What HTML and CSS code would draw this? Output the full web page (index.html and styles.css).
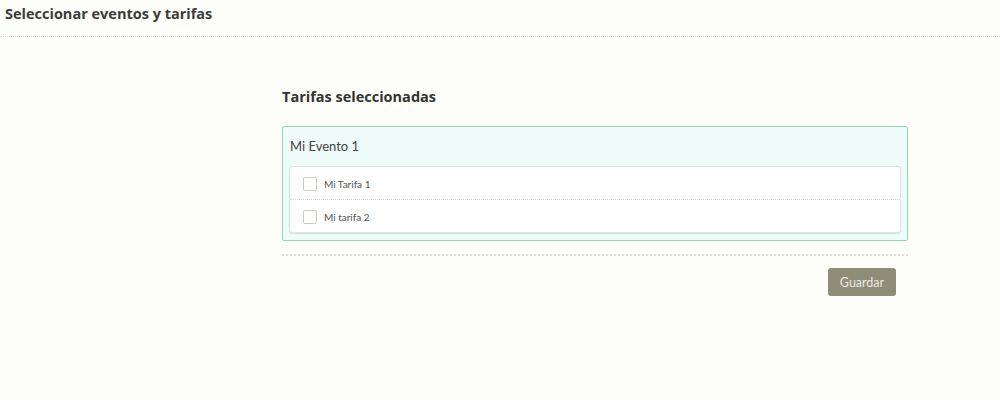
FILE: index.html
```html
<!DOCTYPE html>
<html lang="es">
<head>
<meta charset="utf-8">
<title>Seleccionar eventos y tarifas</title>
<link rel="stylesheet" href="styles.css">
</head>
<body>
<header class="topbar">
  <h1 class="page-title">Seleccionar eventos y tarifas</h1>
</header>
<main class="content">
  <section class="panel">
    <h2 class="panel-title">Tarifas seleccionadas</h2>
    <div class="event-box">
      <div class="event-name">Mi Evento 1</div>
      <ul class="rate-list">
        <li class="rate-row"><span class="check"></span><span class="rate-label">Mi Tarifa 1</span></li>
        <li class="rate-row"><span class="check"></span><span class="rate-label">Mi tarifa 2</span></li>
      </ul>
    </div>
    <hr class="divider">
    <div class="actions">
      <button class="btn-save" type="button">Guardar</button>
    </div>
  </section>
</main>
</body>
</html>
```

FILE: styles.css
```css
html, body {
  margin: 0;
  padding: 0;
  background: #fdfdf9;
  font-family: Lato, "Open Sans", sans-serif;
  color: #333;
}

.topbar {
  height: 37px;
  border-bottom: 1px dotted #d6d6dc;
  box-sizing: border-box;
  padding: 4px 0 0 5px;
}

.page-title {
  margin: 0;
  font-family: "Open Sans", sans-serif;
  font-weight: 700;
  font-size: 14.5px;
  line-height: 20px;
  color: #3c3c3c;
}

.content {
  display: flex;
  justify-content: flex-start;
  padding-left: 282px;
}

.panel {
  width: 626px;
  padding-top: 48px;
}

.panel-title {
  margin: 0 0 17px 0;
  font-family: "Open Sans", sans-serif;
  font-weight: 700;
  font-size: 14.5px;
  line-height: 24px;
  color: #333;
}

.event-box {
  border: 1px solid #93d4bf;
  background: #effbf9;
  border-radius: 2px;
  padding: 0 6px 7px 6px;
}

.event-name {
  font-size: 13px;
  line-height: 18px;
  padding: 10px 1px 11px 1px;
  color: #444;
}

.rate-list {
  list-style: none;
  margin: 0;
  padding: 0;
  background: #fefefe;
  border: 1px solid #d9e6e0;
  border-radius: 3px;
  box-shadow: 0 1px 1px rgba(150, 200, 180, 0.4);
}

.rate-row {
  display: flex;
  align-items: center;
  height: 32px;
  padding-left: 13px;
  padding-top: 1px;
  box-sizing: border-box;
}

.rate-row + .rate-row {
  height: 33px;
  border-top: 1px dotted #d8d8dc;
}

.check {
  width: 12px;
  height: 12px;
  border: 1px solid #c9c9c0;
  border-radius: 2px;
  background: #fff;
  margin-right: 7px;
}

.rate-label {
  font-size: 10px;
  color: #555;
}

.divider {
  margin: 13px 0 0 0;
  border: 0;
  border-top: 2px dotted #e0e0da;
}

.actions {
  display: flex;
  justify-content: flex-end;
  padding: 12px 12px 0 0;
}

.btn-save {
  font-family: Lato, sans-serif;
  font-size: 12.5px;
  color: #e8e8e4;
  background: #8d8d78;
  border: none;
  border-radius: 3px;
  height: 28px;
  width: 68px;
  padding: 0;
}
```
